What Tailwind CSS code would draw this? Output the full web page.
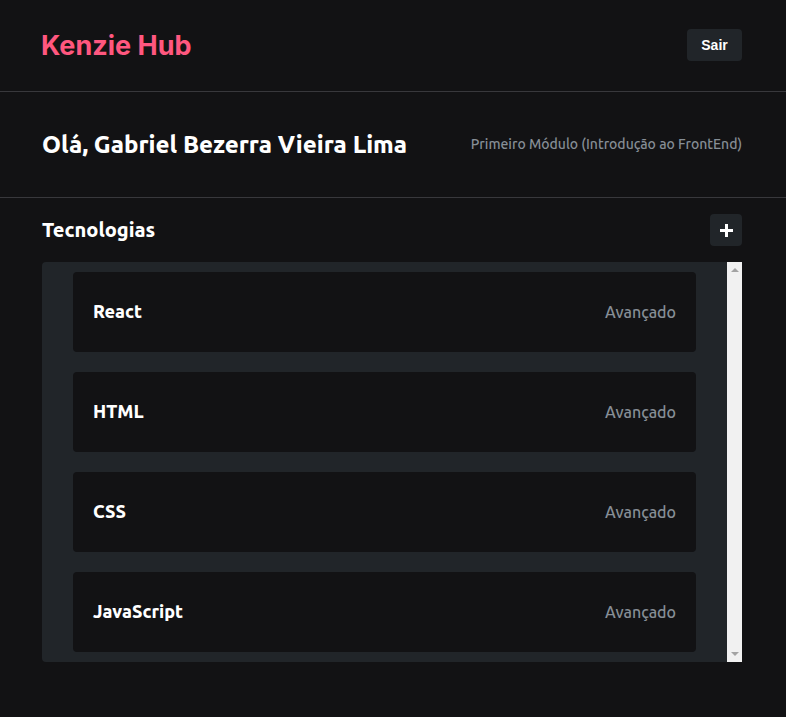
<!DOCTYPE html>
<html lang="pt-BR">
<head>
<meta charset="utf-8">
<meta name="viewport" content="width=device-width, initial-scale=1">
<title>Kenzie Hub</title>
<script src="https://cdn.jsdelivr.net/npm/@tailwindcss/browser@4"></script>
</head>
<body class="min-h-screen bg-[#121214] font-['Ubuntu','Noto_Sans',sans-serif] text-white">
<header class="border-b border-[#38383c]">
  <div class="flex items-center justify-between pt-7 pr-11 pb-[29px] pl-[41px]">
    <h1 class="pt-0.5 font-['Inter',sans-serif] text-[27px] leading-8 font-bold text-[#ff577f]">Kenzie Hub</h1>
    <button type="button" class="h-8 w-[55px] rounded-[4px] bg-[#212529] font-['Liberation_Sans',sans-serif] text-sm font-bold">Sair</button>
  </div>
</header>
<section class="border-b border-[#38383c]">
  <div class="flex h-[105px] items-center justify-between pr-11 pl-[42px]">
    <h2 class="text-2xl font-black whitespace-nowrap">Olá, Gabriel Bezerra Vieira Lima</h2>
    <p class="pb-0.5 text-sm font-medium whitespace-nowrap text-[#868e96]">Primeiro Módulo (Introdução ao FrontEnd)</p>
  </div>
</section>
<main class="pr-11 pl-[42px]">
  <div class="flex items-center justify-between py-4">
    <h2 class="text-xl leading-8 font-black">Tecnologias</h2>
    <button type="button" aria-label="Adicionar tecnologia" class="flex size-8 items-center justify-center rounded-[4px] bg-[#212529]">
      <svg class="size-[13px]" viewBox="0 0 13 13" fill="none" stroke="#fff" stroke-width="3" aria-hidden="true"><path d="M6.5 0v13M0 6.5h13"/></svg>
    </button>
  </div>
  <div class="flex overflow-hidden rounded-l-[4px] bg-[#212529]">
    <ul class="flex grow flex-col gap-5 px-[31px] py-2.5">
      <li class="flex h-20 items-center justify-between rounded-[4px] bg-[#121214] px-5"><h3 class="pb-0.5 text-lg font-black">React</h3><span class="text-base font-medium text-[#868e96]">Avançado</span></li>
      <li class="flex h-20 items-center justify-between rounded-[4px] bg-[#121214] px-5"><h3 class="pb-0.5 text-lg font-black">HTML</h3><span class="text-base font-medium text-[#868e96]">Avançado</span></li>
      <li class="flex h-20 items-center justify-between rounded-[4px] bg-[#121214] px-5"><h3 class="pb-0.5 text-lg font-black">CSS</h3><span class="text-base font-medium text-[#868e96]">Avançado</span></li>
      <li class="flex h-20 items-center justify-between rounded-[4px] bg-[#121214] px-5"><h3 class="pb-0.5 text-lg font-black">JavaScript</h3><span class="text-base font-medium text-[#868e96]">Avançado</span></li>
    </ul>
    <div class="flex w-[15px] flex-col items-center justify-between bg-[#f1f1f1] py-1.5" aria-hidden="true">
      <svg class="h-1 w-2" viewBox="0 0 8 4" fill="#a3a3a3"><path d="M0 4 4 0l4 4z"/></svg>
      <svg class="h-1 w-2" viewBox="0 0 8 4" fill="#a3a3a3"><path d="m0 0 4 4 4-4z"/></svg>
    </div>
  </div>
</main>
</body>
</html>
